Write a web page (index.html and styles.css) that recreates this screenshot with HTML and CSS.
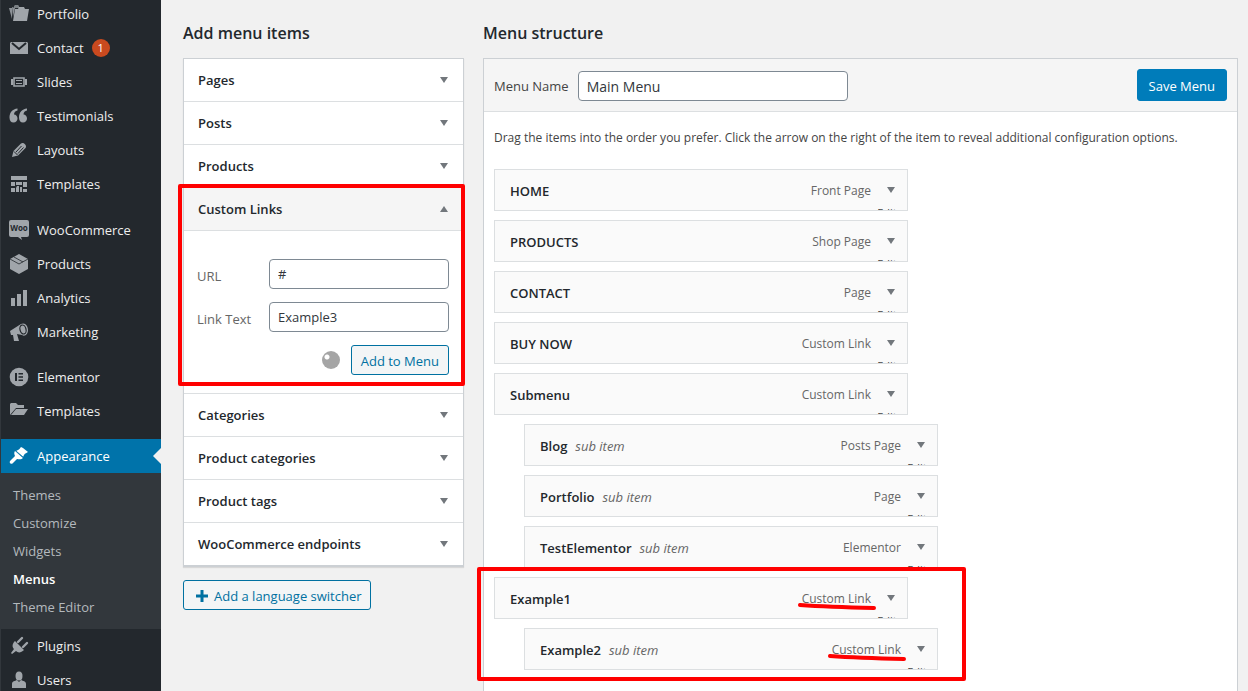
FILE: index.html
```html
<!DOCTYPE html>
<html lang="en">
<head>
<meta charset="utf-8">
<title>Menus</title>
<link rel="stylesheet" href="styles.css">
</head>
<body>
<div class="admin">
  <nav class="sidebar" aria-label="Main menu">
    <a class="nav-item" href="#"><svg class="icon" viewBox="0 0 20 20"><path d="M5 4V2l1-1h3l1 1v2z" opacity=".7"/><path d="M0 4h3v11zM3 3l3 1-2 9z" opacity=".85"/><path d="M6 5h3l1-2h5l1 2h4l-2 12H4z"/></svg>Portfolio</a>
    <a class="nav-item" href="#"><svg class="icon" viewBox="0 0 20 20"><path d="M2 4h16l1 1v11H1V5z"/><path d="M3 5l7 6 7-6" fill="none" stroke="#23282d" stroke-width="2"/></svg>Contact <span class="count">1</span></a>
    <a class="nav-item" href="#"><svg class="icon" viewBox="0 0 20 20"><path d="M2 7h2v6H2zM16 7h2v6h-2z"/><path d="M5 6h10v8H5z" fill="none" stroke="currentColor" stroke-width="1.600"/><path d="M7 8h6v1H7zM7 11h6v1H7z"/></svg>Slides</a>
    <a class="nav-item" href="#"><svg class="icon" viewBox="0 0 20 20"><path d="M8.500 2.500C3.500 3 .500 6.500 .500 11.500c0 3 1.500 5 4 5s4-1.700 4-4-1.500-4-3.500-4C5 6 6.500 5 8.500 4.500z"/><path d="M18 2.500c-5 .500-8 4-8 9 0 3 1.500 5 4 5s4-1.700 4-4-1.500-4-3.500-4c0-2.500 1.500-3.500 3.500-4z"/></svg>Testimonials</a>
    <a class="nav-item" href="#"><svg class="icon" viewBox="0 0 20 20"><path d="M3 17l1.500-6L12 3.500c2-2 6.500 1.500 4.500 4.500L9 15.500z"/><path d="M7 12l5.500-6M9 13.500l5.500-6" stroke="#23282d"/><path d="M5 11.500l3.500 3.500" stroke="#23282d"/></svg>Layouts</a>
    <a class="nav-item" href="#"><svg class="icon" viewBox="0 0 20 20"><path d="M2 2h16v4H2zM2 8h4v4H2zM7 8h6v3H7zM14 8h4v5h-4zM2 14h4v4H2zM8 12h2v6H7v-4zM11 13h2v5h-2zM14 15h4v3h-4z"/></svg>Templates</a>
    <div class="separator tall"></div>
    <a class="nav-item" href="#"><svg class="icon" viewBox="0 0 20 20"><path d="M2 0h16q2 0 2 2v13q0 2-2 2h-6l1 3-4-3H2q-2 0-2-2V2q0-2 2-2z"/><text class="woo" x="10" y="11" text-anchor="middle">Woo</text></svg>WooCommerce</a>
    <a class="nav-item" href="#"><svg class="icon" viewBox="0 0 20 20"><path d="M10 0l9 5v10l-9 5-9-5V5z"/><path d="M1 5l9 5 9-5M5 3l9 5" fill="none" stroke="#23282d" stroke-width=".8"/></svg>Products</a>
    <a class="nav-item" href="#"><svg class="icon" viewBox="0 0 20 20"><path d="M2 10h4v8H2zM8 6h4v12H8zM14 2h4v16h-4z"/></svg>Analytics</a>
    <a class="nav-item" href="#"><svg class="icon" viewBox="0 0 20 20"><path d="M1 9l11-7c4-2 7 2 7 6s-3 7-6 5l-5-1 2 7H5l-1-6H2z"/><ellipse cx="14" cy="7.500" rx="3" ry="4.600" transform="rotate(-15 14 7.500)" fill="none" stroke="#23282d" stroke-width="1.200"/></svg>Marketing</a>
    <div class="separator"></div>
    <a class="nav-item" href="#"><svg class="icon" viewBox="0 0 20 20"><circle cx="10" cy="10" r="9.300"/><path d="M6 6h2v8H6zM9.500 6H14v1.600H9.500zM9.500 9.200H14v1.600H9.500zM9.500 12.400H14V14H9.500z" fill="#23282d"/></svg>Elementor</a>
    <a class="nav-item" href="#"><svg class="icon" viewBox="0 0 20 20"><path d="M1 14V3l1-1h5l2 2h6v3H7z"/><path d="M7 8h12l-4 6H2z"/></svg>Templates</a>
    <div class="separator"></div>
    <a class="nav-item current" href="#"><svg class="icon" viewBox="0 0 20 20"><path d="M12 1l2 1 5 4c-1 1-3 1-4 3l-1 2-7-6 2-1c2-1 2-2 3-3zM6 5l8 7c-2 2-4 1-6 1l-4 4c-2 2-4 0-3-2l5-5c-1-2-1-4 0-5z"/><path d="M7 5l7 6" stroke="#0073aa" stroke-width=".8"/></svg>Appearance</a>
    <div class="submenu">
      <a href="#">Themes</a>
      <a href="#">Customize</a>
      <a href="#">Widgets</a>
      <a class="active" href="#">Menus</a>
      <a href="#">Theme Editor</a>
    </div>
    <a class="nav-item" href="#"><svg class="icon" viewBox="0 0 20 20"><path d="M6 5l9 9c-3 3-6 3-8 1l-4 3-1-1 3-4C3 11 3 8 6 5z"/><path d="M9 6l4-4M14 11l4-4" stroke="currentColor" stroke-width="2.400" stroke-linecap="round"/></svg>Plugins</a>
    <a class="nav-item" href="#"><svg class="icon" viewBox="0 0 20 20"><ellipse cx="10" cy="6" rx="3.500" ry="4.500"/><path d="M3 18v-4c0-3 3-3 5-4l2 2 2-2c2 1 5 1 5 4v4z"/></svg>Users</a>
  </nav>

  <main class="content">
    <section class="add-column">
      <h2>Add menu items</h2>
      <div class="accordion">
        <button class="acc-title" type="button">Pages<span class="arrow"></span></button>
        <button class="acc-title" type="button">Posts<span class="arrow"></span></button>
        <button class="acc-title" type="button">Products<span class="arrow"></span></button>
        <div class="acc-open">
          <button class="acc-title open" type="button">Custom Links<span class="arrow up"></span></button>
          <form class="link-form">
            <div class="field"><label for="url">URL</label><input id="url" type="text" value="#"></div>
            <div class="field"><label for="link-text">Link Text</label><input id="link-text" type="text" value="Example3"></div>
            <div class="form-actions"><span class="spinner"></span><button class="button" type="button">Add to Menu</button></div>
          </form>
          <div class="mark mark-links"></div>
        </div>
        <button class="acc-title" type="button">Categories<span class="arrow"></span></button>
        <button class="acc-title" type="button">Product categories<span class="arrow"></span></button>
        <button class="acc-title" type="button">Product tags<span class="arrow"></span></button>
        <button class="acc-title" type="button">WooCommerce endpoints<span class="arrow"></span></button>
      </div>
      <button class="button language" type="button"><svg class="plus" viewBox="0 0 12 12"><path d="M4.500 0h3v4.500H12v3H7.500V12h-3V7.500H0v-3h4.500z"/></svg>Add a language switcher</button>
    </section>

    <section class="structure-column">
      <h2>Menu structure</h2>
      <div class="panel">
        <div class="panel-head">
          <label for="menu-name">Menu Name</label>
          <input id="menu-name" type="text" value="Main Menu">
          <button class="button primary" type="button">Save Menu</button>
        </div>
        <div class="panel-body">
          <p>Drag the items into the order you prefer. Click the arrow on the right of the item to reveal additional configuration options.</p>
          <ul class="items">
            <li class="item"><span class="name">HOME</span><span class="type">Front Page</span><a class="toggle" href="#"><span class="arrow"></span>Edit</a></li>
            <li class="item"><span class="name">PRODUCTS</span><span class="type">Shop Page</span><a class="toggle" href="#"><span class="arrow"></span>Edit</a></li>
            <li class="item"><span class="name">CONTACT</span><span class="type">Page</span><a class="toggle" href="#"><span class="arrow"></span>Edit</a></li>
            <li class="item"><span class="name">BUY NOW</span><span class="type">Custom Link</span><a class="toggle" href="#"><span class="arrow"></span>Edit</a></li>
            <li class="item"><span class="name">Submenu</span><span class="type">Custom Link</span><a class="toggle" href="#"><span class="arrow"></span>Edit</a></li>
            <li class="item sub"><span class="name">Blog</span><em>sub item</em><span class="type">Posts Page</span><a class="toggle" href="#"><span class="arrow"></span>Edit</a></li>
            <li class="item sub"><span class="name">Portfolio</span><em>sub item</em><span class="type">Page</span><a class="toggle" href="#"><span class="arrow"></span>Edit</a></li>
            <li class="item sub"><span class="name">TestElementor</span><em>sub item</em><span class="type">Elementor</span><a class="toggle" href="#"><span class="arrow"></span>Edit</a></li>
            <li class="marked">
              <ul class="items">
                <li class="item"><span class="name">Example1</span><span class="type">Custom Link<svg class="underline" viewBox="0 0 78 8"><path d="M2 2Q30 4 76 5"/></svg></span><a class="toggle" href="#"><span class="arrow"></span>Edit</a></li>
                <li class="item sub"><span class="name">Example2</span><em>sub item</em><span class="type">Custom Link<svg class="underline" viewBox="0 0 78 8"><path d="M2 2Q30 4 76 5"/></svg></span><a class="toggle" href="#"><span class="arrow"></span>Edit</a></li>
              </ul>
              <div class="mark mark-items"></div>
            </li>
          </ul>
        </div>
      </div>
    </section>
  </main>
</div>
</body>
</html>
```
FILE: styles.css
```css
* { box-sizing: border-box; }
body {
  margin: 0;
  background: #f1f1f1;
  color: #444;
  font: 13px/20px "Open Sans", "Noto Sans", sans-serif;
}
button, input { font: inherit; color: inherit; margin: 0; }
a { text-decoration: none; color: inherit; }
.admin { display: flex; height: 100vh; overflow: hidden; }

.sidebar {
  flex: 0 0 161px;
  background: #23282d;
  border-left: 1px solid #32373c;
  color: #eee;
}
.nav-item {
  display: flex;
  align-items: center;
  gap: 8px;
  height: 34px;
  padding-left: 8px;
}
.nav-item:first-child { margin-top: -3px; }
.icon { width: 20px; height: 20px; fill: currentColor; color: #a0a5aa; flex: none; }
.woo { font: 700 8px "Open Sans", sans-serif; fill: #23282d; }
.count {
  width: 18px;
  height: 18px;
  border-radius: 9px;
  background: #ca4a1f;
  color: #fff;
  font-size: 11px;
  line-height: 18px;
  text-align: center;
}
.separator { height: 11px; }
.separator.tall { height: 12px; }
.current { position: relative; background: #0073aa; color: #fff; }
.current .icon { color: #fff; }
.current::after {
  content: "";
  position: absolute;
  right: 0;
  top: 9px;
  border: 8px solid transparent;
  border-right-color: #f1f1f1;
  border-left: 0;
}
.submenu {
  display: flex;
  flex-direction: column;
  padding: 8px 12px;
  background: #32373c;
  color: #b4b9be;
  line-height: 28px;
}
.submenu .active { color: #fff; font-weight: 600; }

.content { flex: 1; display: flex; gap: 19px; padding: 22px 10px 0 22px; min-width: 0; }
.add-column { flex: 0 0 281px; }
.structure-column { flex: 1; min-width: 0; display: flex; flex-direction: column; }
h2 { margin: 0 0 14px; font-size: 16px; line-height: 22px; font-weight: 600; color: #23282d; }

.accordion { border: 1px solid #ccd0d4; background: #fff; box-shadow: 0 1px 1px rgba(0, 0, 0, .1); }
.acc-title {
  display: flex;
  align-items: center;
  justify-content: space-between;
  width: 100%;
  height: 43px;
  padding: 0 15px 0 14px;
  border: 0;
  border-bottom: 1px solid #dcdfe1;
  background: #fff;
  color: #23282d;
  font-weight: 600;
}
.acc-title:last-child { border-bottom-color: #ccd0d4; }
.acc-title.open { background: #f5f5f5; border-bottom-color: #dcdfe1; }
.arrow { border: 4px solid transparent; border-top: 6px solid #72777c; border-bottom: 0; }
.arrow.up { border-bottom: 6px solid #72777c; border-top: 0; }
.acc-open { position: relative; border-bottom: 1px solid #dcdfe1; }
.link-form { padding: 28px 14px 18px 13px; display: flex; flex-direction: column; gap: 13px; }
.field { display: flex; align-items: center; justify-content: space-between; color: #666; }
.field label { padding-top: 4px; }
input {
  height: 30px;
  padding: 0 8px;
  border: 1px solid #7e8993;
  border-radius: 4px;
  background: #fff;
  color: #32373c;
}
.field input { width: 180px; }
.form-actions { display: flex; align-items: center; justify-content: flex-end; gap: 11px; }
.spinner { width: 18px; height: 18px; border-radius: 50%; background: radial-gradient(circle at 5px 6px, #fff 2px, #a5a5a5 3px); }
.button {
  height: 30px;
  padding: 2px 9px 0;
  border: 1px solid #0071a1;
  border-radius: 3px;
  background: #f3f5f6;
  color: #0071a1;
}
.language { display: flex; align-items: center; gap: 6px; margin-top: 13px; padding: 2px 8px 0 12px; }
.plus { width: 12px; height: 12px; fill: currentColor; }

.panel { flex: 1; border: 1px solid #ccd0d4; border-bottom: 0; background: #fff; }
.panel-head { display: flex; align-items: flex-end; height: 53px; padding: 0 10px 10px; gap: 9px; background: #f5f5f5; border-bottom: 1px solid #dcdfe1; }
.panel-head label { line-height: 30px; }
.panel-head input { width: 270px; font-size: 14px; }
.primary { height: 32px; margin-left: auto; padding: 2px 11px 0; background: #007cba; border-color: #007cba; color: #fff; }
.panel-body { padding: 16px 10px; }
p { margin: 0 0 21px; font-size: 12px; }
.items { display: flex; flex-direction: column; gap: 9px; margin: 0; padding: 0; list-style: none; }
.item {
  display: flex;
  align-items: center;
  width: 414px;
  height: 42px;
  padding: 2px 8px 0 15px;
  border: 1px solid #dcdfe1;
  background: #fafafa;
  overflow: hidden;
}
.sub { margin-left: 30px; }
.name { font-weight: 600; color: #23282d; }
.item em { margin-left: 8px; color: #666; }
.type { position: relative; margin-left: auto; font-size: 12px; color: #666; }
.toggle {
  display: flex;
  flex-direction: column;
  align-items: center;
  gap: 10px;
  align-self: flex-start;
  width: 24px;
  margin: 15px 0 0 4px;
  font-size: 11px;
}
.toggle .arrow { margin-left: 8px; }
.marked { position: relative; }
.mark { position: absolute; border: 4px solid #f00; border-radius: 2px; }
.mark-links { inset: -4px -2px 7px -6px; }
.mark-items { top: -10px; left: -17px; width: 489px; bottom: -11px; }
.underline { position: absolute; left: -4px; bottom: -2px; width: 78px; height: 8px; fill: none; stroke: #f00; stroke-width: 4; stroke-linecap: round; }
```
